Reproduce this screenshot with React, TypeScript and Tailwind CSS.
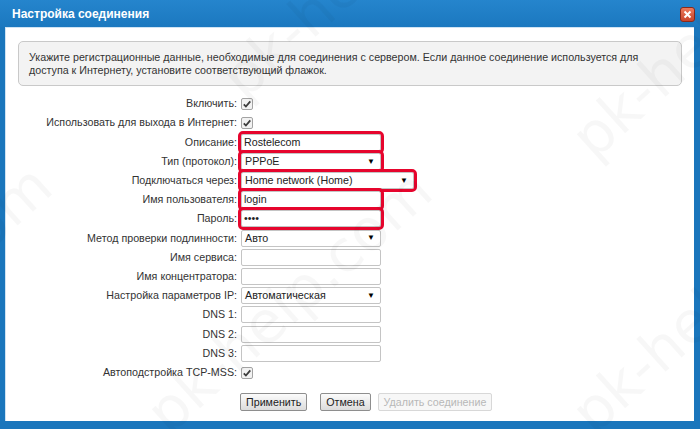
import React from "react";

const font = "font-['Liberation_Sans',Arial,sans-serif]";

function Check() {
  return (
    <svg width="12" height="12" viewBox="0 0 12 12" className="block">
      <rect x="0.5" y="0.5" width="11" height="11" rx="1.5" fill="#f2f2f2" stroke="#a3a3a3" />
      <path d="M2.8 6.3 L4.9 8.5 L9.3 3.3" fill="none" stroke="#3c3c3c" strokeWidth="1.8" />
    </svg>
  );
}

function TextBox({ value = "", red = false, w = "w-[140px]" }: { value?: string; red?: boolean; w?: string }) {
  return (
    <div
      className={`${w} h-[17px] bg-white border border-[#c4c4c4] rounded-[2px] px-[2px] flex items-center text-[10.7px] text-[#222] ${
        red ? "outline-3 outline-[#e6052d] outline-offset-0" : ""
      }`}
    >
      {value}
    </div>
  );
}

function Select({ value, red = false, w = "w-[140px]" }: { value: string; red?: boolean; w?: string }) {
  return (
    <div
      className={`${w} h-[17px] bg-white border border-[#c4c4c4] rounded-[2px] pl-[3px] pr-[5px] flex items-center justify-between text-[10.7px] text-[#222] ${
        red ? "outline-3 outline-[#e6052d] outline-offset-0" : ""
      }`}
    >
      <span>{value}</span>
      <span className="text-[8px] leading-none text-black">▼</span>
    </div>
  );
}

function Row({ label, children, extra = "" }: { label: string; children: React.ReactNode; extra?: string }) {
  return (
    <div className={`grid grid-cols-[231px_1fr] gap-x-[4px] items-center h-[19px] ${extra}`}>
      <span className="text-right text-[10.7px] text-[#333] whitespace-nowrap">{label}</span>
      <div className="flex items-center">{children}</div>
    </div>
  );
}

function Btn({ children, disabled = false }: { children: React.ReactNode; disabled?: boolean }) {
  return (
    <div
      className={`h-[18px] px-[5px] flex items-center text-[10.7px] rounded-[2px] border ${
        disabled
          ? "border-[#d8d8d8] text-[#b8b8b8] bg-[#f7f7f7]"
          : "border-[#8e8e8e] text-[#222] bg-gradient-to-b from-[#fbfbfb] to-[#dcdcdc]"
      }`}
    >
      {children}
    </div>
  );
}

const marks = [
  "left-[-205px] top-[380px]",
  "left-[175px] top-[385px]",
  "left-[250px] top-[50px]",
  "left-[600px] top-[110px]",
  "left-[600px] top-[385px]",
];

export default function App() {
  return (
    <div className={`${font} relative w-[700px] h-[429px] overflow-hidden bg-[#1a76bc] flex flex-col`}>
      {/* Title bar */}
      <div className="h-[27px] flex items-center justify-between pl-[12px] pr-[5px] bg-gradient-to-b from-[#2585cd] to-[#1b78bf]">
        <span className="text-white font-bold text-[12px]">Настройка соединения</span>
        <div className="w-[15px] h-[15px] mt-[1px] rounded-[3px] border border-[#8a2a1a] bg-gradient-to-b from-[#ec7a5c] to-[#c9432a] flex items-center justify-center">
          <svg width="9" height="9" viewBox="0 0 9 9">
            <path d="M1.5 1.5 L7.5 7.5 M7.5 1.5 L1.5 7.5" stroke="white" strokeWidth="2" />
          </svg>
        </div>
      </div>

      {/* Body */}
      <div className="flex-1 ml-[5px] mr-[6px] mb-[8px] bg-white border-l border-t border-[#cfe3f3] flex flex-col">
        <div className="mt-[13px] mx-[12px] h-[45px] rounded-[5px] border border-[#c9c9c9] bg-[#f3f3f3] px-[10px] pt-[9px] text-[10.7px] leading-[13px] text-[#333] whitespace-nowrap">
          Укажите регистрационные данные, необходимые для соединения с сервером. Если данное соединение используется для
          <br />
          доступа к Интернету, установите соответствующий флажок.
        </div>

        <div className="mt-[8px] flex flex-col">
          <Row label="Включить:">
            <Check />
          </Row>
          <Row label="Использовать для выхода в Интернет:">
            <Check />
          </Row>
          <Row label="Описание:" extra="h-[20px]">
            <TextBox value="Rostelecom" red />
          </Row>
          <Row label="Тип (протокол):">
            <Select value="PPPoE" red />
          </Row>
          <Row label="Подключаться через:">
            <Select value="Home network (Home)" red w="w-[173px]" />
          </Row>
          <Row label="Имя пользователя:">
            <TextBox value="login" red />
          </Row>
          <Row label="Пароль:">
            <TextBox value="••••" red />
          </Row>
          <Row label="Метод проверки подлинности:" extra="h-[20px]">
            <Select value="Авто" />
          </Row>
          <Row label="Имя сервиса:">
            <TextBox />
          </Row>
          <Row label="Имя концентратора:">
            <TextBox />
          </Row>
          <Row label="Настройка параметров IP:">
            <Select value="Автоматическая" />
          </Row>
          <Row label="DNS 1:">
            <TextBox />
          </Row>
          <Row label="DNS 2:" extra="h-[20px]">
            <TextBox />
          </Row>
          <Row label="DNS 3:">
            <TextBox />
          </Row>
          <Row label="Автоподстройка TCP-MSS:">
            <Check />
          </Row>
        </div>

        <div className="mt-[11px] pl-[234px] flex items-center">
          <Btn>Применить</Btn>
          <div className="ml-[13px]">
            <Btn>Отмена</Btn>
          </div>
          <div className="ml-[7px]">
            <Btn disabled>Удалить соединение</Btn>
          </div>
        </div>
      </div>

      {/* Watermark */}
      {marks.map((m) => (
        <span
          key={m}
          className={`pointer-events-none absolute ${m} origin-[0_100%] -rotate-[42deg] whitespace-nowrap text-[58px] leading-none font-['DejaVu_Sans',sans-serif] text-black/[0.03]`}
        >
          pk-help.com
        </span>
      ))}
    </div>
  );
}
